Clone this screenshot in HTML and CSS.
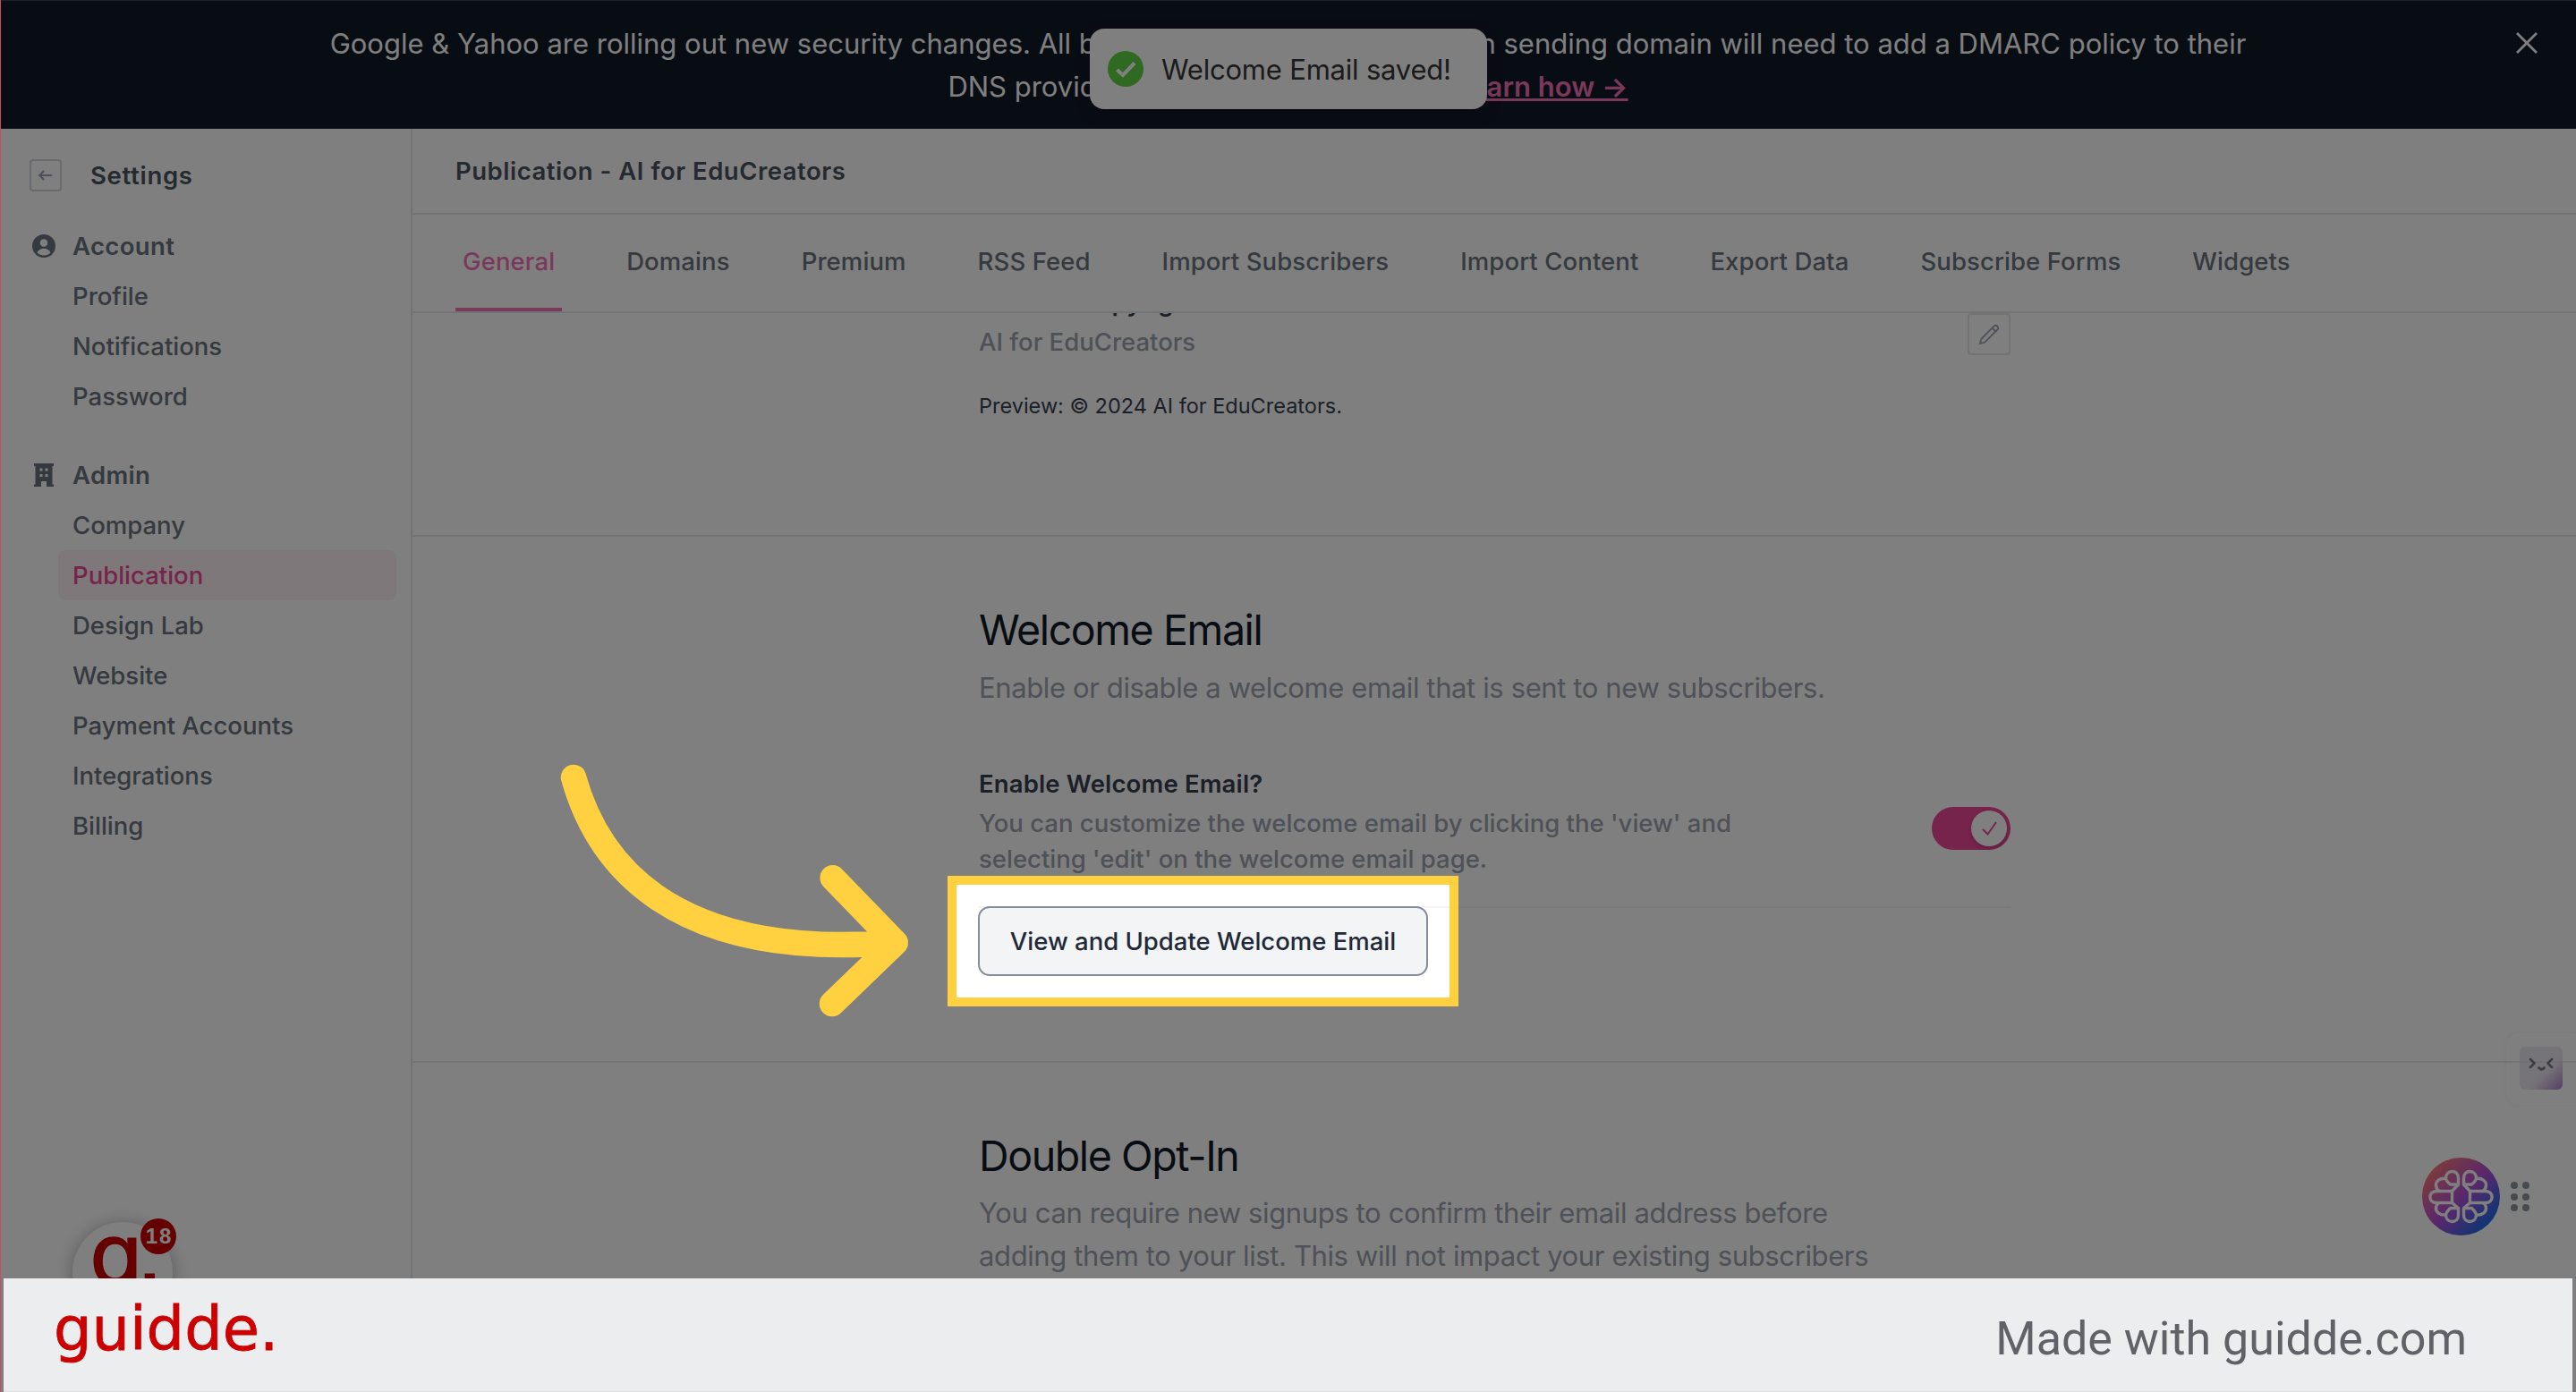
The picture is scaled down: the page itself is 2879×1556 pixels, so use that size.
FILE: index.html
```html
<!DOCTYPE html>
<html lang="en">
<head>
    <meta charset="UTF-8">
    <meta name="viewport" content="width=device-width, initial-scale=1.0">
    <title>Settings - Publication</title>
    <link rel="stylesheet" href="styles.css">
</head>
<body>
    <div class="banner">
        <p class="banner-text">
            Google &amp; Yahoo are rolling out new security changes. All <span class="banner-mid">beehiiv users with their own</span> sending domain will need to add a DMARC policy to their<br>
            DNS <span class="banner-mid2">provider before February 2024.</span> <a href="#">Learn how &rarr;</a>
        </p>
        <svg class="banner-close" viewBox="0 0 24 24"><path d="M1 1L23 23M23 1L1 23"/></svg>
    </div>

    <div class="layout">
        <aside class="sidebar">
            <div class="sidebar-head">
                <span class="back-btn">
                    <svg viewBox="0 0 20 20"><path d="M18 10H3M8 4.500L2.500 10L8 15.500"/></svg>
                </span>
                <span class="sidebar-title">Settings</span>
            </div>
            <div class="nav-group">
                <div class="nav-heading">
                    <svg class="nav-icon" viewBox="0 0 26 26">
                        <circle cx="13" cy="13" r="13" fill="#6b7280"/>
                        <circle cx="13" cy="9.500" r="4.300" fill="#fff"/>
                        <path d="M5.500 20.500C7 17.300 9.700 15.800 13 15.800S19 17.300 20.500 20.500C18.500 22.500 16 23.500 13 23.500S7.500 22.500 5.500 20.500Z" fill="#fff"/>
                    </svg>
                    Account
                </div>
                <a class="nav-item">Profile</a>
                <a class="nav-item">Notifications</a>
                <a class="nav-item">Password</a>
            </div>
            <div class="nav-group">
                <div class="nav-heading">
                    <svg class="nav-icon" viewBox="0 0 26 26">
                        <path d="M2 0H24V3H22.500V23.500H24V26H16V20H10V26H2V23.500H3.500V3H2Z" fill="#6b7280"/>
                        <path d="M8.500 5.500h3v3h-3zM14.500 5.500h3v3h-3zM8.500 12h3v3h-3zM14.500 12h3v3h-3z" fill="#fff"/>
                    </svg>
                    Admin
                </div>
                <a class="nav-item">Company</a>
                <a class="nav-item active">Publication</a>
                <a class="nav-item">Design Lab</a>
                <a class="nav-item">Website</a>
                <a class="nav-item">Payment Accounts</a>
                <a class="nav-item">Integrations</a>
                <a class="nav-item">Billing</a>
            </div>
        </aside>

        <main class="main">
            <div class="page-header">Publication - AI for EduCreators</div>
            <nav class="tabs">
                <a class="tab active">General</a>
                <a class="tab">Domains</a>
                <a class="tab">Premium</a>
                <a class="tab">RSS Feed</a>
                <a class="tab">Import Subscribers</a>
                <a class="tab">Import Content</a>
                <a class="tab">Export Data</a>
                <a class="tab">Subscribe Forms</a>
                <a class="tab">Widgets</a>
            </nav>

            <div class="content">
                <section class="section section-copyright">
                    <div class="setting">
                        <div class="setting-text">
                            <div class="label">Custom Copyright</div>
                            <div class="desc">AI for EduCreators</div>
                            <div class="preview">Preview: © 2024 AI for EduCreators.</div>
                        </div>
                        <span class="edit-btn">
                            <svg viewBox="0 0 24 24"><path d="M2 22L3.200 17L17.500 2.700A2.600 2.600 0 0 1 21.300 6.500L7 20.800ZM15.500 4.700L19.300 8.500"/></svg>
                        </span>
                    </div>
                </section>

                <section class="section section-welcome">
                    <h2>Welcome Email</h2>
                    <p class="sub">Enable or disable a welcome email that is sent to new subscribers.</p>
                    <div class="setting">
                        <div class="setting-text">
                            <div class="label">Enable Welcome Email?</div>
                            <div class="desc">You can customize the welcome email by clicking the 'view' and selecting 'edit' on the welcome email page.</div>
                        </div>
                        <span class="toggle">
                            <span class="knob">
                                <svg viewBox="0 0 20 20"><path d="M3 11L8.500 16.500L18 3"/></svg>
                            </span>
                        </span>
                    </div>
                    <button class="view-btn">View and Update Welcome Email</button>
                </section>

                <section class="section section-optin">
                    <h2>Double Opt-In</h2>
                    <p class="sub">You can require new signups to confirm their email address before adding them to your list. This will not impact your existing subscribers</p>
                </section>
            </div>
        </main>
    </div>

    <div class="toast">
        <svg viewBox="0 0 40 40">
            <circle cx="20" cy="20" r="20" fill="#61d345"/>
            <path d="M10.500 21L17 27L30 13.500" fill="none" stroke="#fff" stroke-width="4"/>
        </svg>
        Welcome Email saved!
    </div>

    <div class="chat-bubble">g.</div>
    <div class="chat-badge">18</div>

    <div class="face-widget">
        <svg viewBox="0 0 48 48">
            <path d="M12 14L16.500 18.500L12 23M36 14L31.500 18.500L36 23M21.500 23.500Q24.500 27 27.500 23.500" fill="none" stroke="#7b7d8a" stroke-width="2.800" stroke-linecap="round" stroke-linejoin="round"/>
        </svg>
    </div>

    <svg class="brain" viewBox="0 0 87 87">
        <defs>
            <linearGradient id="brainFill" x1="0.100" y1="0.100" x2="0.900" y2="0.900">
                <stop offset="0" stop-color="#ff7a6e"/>
                <stop offset="0.500" stop-color="#b44fd8"/>
                <stop offset="1" stop-color="#0a6fe8"/>
            </linearGradient>
        </defs>
        <circle cx="43.500" cy="43.500" r="43.500" fill="url(#brainFill)"/>
        <g id="lobes" fill="none" stroke="#fff" stroke-width="3.400" stroke-linejoin="round">
            <path d="M40.500 30V23C40.500 18 37.500 15.500 33.500 15.500C29 15.500 26.500 19 26.500 23C26.500 25 27.500 26.500 31.500 30Z"/>
            <path d="M27 23.500C20 22 15 27 15.500 31C15.800 34 17.500 36.500 19 37.500"/>
            <path d="M40.500 30L33.500 37.500H16C6.500 37.500 6.500 50.500 16 50.500H33.500V37.500M33.500 50.500L40.500 56.500"/>
            <path d="M40.500 56.500V64C40.500 69 37.500 71.500 33.500 71.500C29 71.500 26.500 68 26.500 64C26.500 62 27.500 60.500 31.500 56.500Z"/>
            <path d="M27 64C20 65 15 60.500 15.500 56C15.800 53.500 17 51.500 19 50.500"/>
        </g>
        <use href="#lobes" transform="translate(87 0) scale(-1 1)"/>
    </svg>
    <div class="drag-dots"><i></i><i></i><i></i><i></i><i></i><i></i></div>

    <!-- dims everything except the highlighted button -->
    <div class="spotlight"></div>

    <svg class="arrow" viewBox="600 840 440 320">
        <path d="M641 869C665 955 740 1075 1000 1053.500M930.700 981.300L1000.700 1053.700L930 1122"/>
    </svg>

    <div class="red-edge"></div>
    <footer class="guidde-bar">
        <span class="guidde-logo">guidde.</span>
        <span class="made-with">Made with guidde.com</span>
    </footer>
</body>
</html>
```
FILE: styles.css
```css
* {
    box-sizing: border-box;
}
body {
    margin: 0;
    width: 2879px;
    height: 1556px;
    position: relative;
    overflow: hidden;
    font-family: Inter, "Liberation Sans", sans-serif;
    font-size: 27.5px;
    background-color: #fff;
}

/* top banner */
.banner {
    height: 144px;
    background-color: #111827;
    border-top: 1px solid #374151;
    border-bottom: 1px solid #1f2937;
    color: #fff;
    position: relative;
}
.banner-text {
    margin: 0;
    padding-top: 24px;
    text-align: center;
    font-size: 31px;
    line-height: 48px;
    white-space: nowrap;
}
.banner-mid,
.banner-mid2 {
    display: inline-block;
    width: 466px;
    white-space: normal;
    text-align: justify;
    text-align-last: justify;
}
.banner-mid2 {
    width: 483px;
}
.banner a {
    color: #f472b6;
    font-weight: 600;
    text-decoration: underline;
}
.banner-close {
    position: absolute;
    left: 2812px;
    top: 35px;
    width: 24px;
    height: 24px;
    fill: none;
    stroke: #fff;
    stroke-width: 2.8;
}

.layout {
    display: flex;
    height: 1412px;
}

/* sidebar */
.sidebar {
    width: 461px;
    border-right: 2px solid #e5e7eb;
    padding: 34px 16px 0 33px;
    flex-shrink: 0;
}
.sidebar-head {
    display: flex;
    align-items: center;
    gap: 32px;
    height: 36px;
    margin-bottom: 33px;
}
.back-btn {
    width: 36px;
    height: 36px;
    border: 2px solid #d1d5db;
    border-radius: 4px;
    display: flex;
    align-items: center;
    justify-content: center;
}
.back-btn svg {
    width: 18px;
    height: 18px;
    fill: none;
    stroke: #9ca3af;
    stroke-width: 2.4;
}
.sidebar-title {
    font-weight: 600;
    letter-spacing: 0.7px;
    color: #4b5563;
}
.nav-group {
    margin-bottom: 32px;
}
.nav-heading {
    display: flex;
    align-items: center;
    gap: 19px;
    height: 56px;
    padding-left: 3px;
    font-weight: 600;
    letter-spacing: 0.35px;
    color: #6b7280;
}
.nav-icon {
    width: 26px;
    height: 26px;
}
.nav-item {
    display: block;
    margin-left: 32px;
    padding-left: 16px;
    line-height: 56px;
    border-radius: 8px;
    font-weight: 500;
    color: #6b7280;
}
.nav-item.active {
    background-color: #fff0f4;
    color: #ec4899;
}

/* main */
.main {
    flex: 1;
    display: flex;
    flex-direction: column;
    min-width: 0;
}
.page-header {
    height: 96px;
    flex-shrink: 0;
    line-height: 94px;
    padding-left: 48px;
    border-bottom: 2px solid #e5e7eb;
    font-weight: 600;
    letter-spacing: 0.5px;
    color: #4b5563;
}
.tabs {
    display: flex;
    gap: 64px;
    height: 110px;
    flex-shrink: 0;
    padding-left: 48px;
    border-bottom: 2px solid #e5e7eb;
}
.tab {
    padding: 0 8px;
    line-height: 104px;
    border-bottom: 4px solid transparent;
    font-weight: 500;
    letter-spacing: 0.1px;
    color: #6b7280;
}
.tab.active {
    color: #f472b6;
    border-bottom-color: #f472b6;
}
.content {
    flex: 1;
    overflow: hidden;
}
.section {
    height: 588px;
    padding: 76px 632px 0 633px;
    border-bottom: 2px solid #e5e7eb;
}
.section-copyright {
    height: 282px;
    margin-top: -32px;
    padding-top: 0;
}
.setting {
    display: flex;
    justify-content: space-between;
}
.setting-text {
    width: 880px;
}
.label {
    line-height: 40px;
    font-weight: 600;
    letter-spacing: 0.15px;
    color: #374151;
}
.desc {
    margin-top: 4px;
    line-height: 40px;
    font-weight: 500;
    color: #9ca3af;
}
.preview {
    margin-top: 36px;
    font-size: 23.5px;
    line-height: 32px;
    color: #374151;
}
.edit-btn {
    margin-top: 32px;
    width: 48px;
    height: 47px;
    border: 2px solid #e5e7eb;
    border-radius: 4px;
    display: flex;
    align-items: center;
    justify-content: center;
}
.edit-btn svg {
    width: 24px;
    height: 24px;
    fill: none;
    stroke: #9ca3af;
    stroke-width: 1.8;
}
h2 {
    margin: 0;
    font-size: 46.5px;
    font-weight: 400;
    line-height: 56px;
    letter-spacing: -1.4px;
    color: #111827;
}
.sub {
    margin: 13px 0 0;
    width: 1020px;
    font-size: 31px;
    line-height: 48px;
    letter-spacing: -0.38px;
    color: #9ca3af;
}
.section-optin .sub {
    margin-top: 12px;
}
.section-welcome .setting {
    margin-top: 63px;
    height: 159px;
    border-bottom: 2px solid #f3f4f6;
}
.toggle {
    margin-top: 46px;
    width: 88px;
    height: 48px;
    padding: 4px;
    border-radius: 24px;
    background-color: #ec4899;
    display: flex;
    justify-content: flex-end;
}
.knob {
    width: 40px;
    height: 40px;
    border-radius: 50%;
    background-color: #fff;
    box-shadow: 0 2px 4px rgba(0,0,0,0.2);
    display: flex;
    align-items: center;
    justify-content: center;
}
.knob svg {
    width: 20px;
    height: 20px;
    fill: none;
    stroke: #ec4899;
    stroke-width: 2;
}
.view-btn {
    display: block;
    margin: -2px 0 0 -1px;
    width: 503px;
    height: 78px;
    padding: 0 0 1px;
    position: relative;
    border: 2px solid #858d99;
    border-radius: 13px;
    background-color: #f3f4f6;
    font-family: inherit;
    font-size: 27.5px;
    font-weight: 500;
    color: #1f2937;
}

/* floating things */
.toast {
    position: absolute;
    left: 1218px;
    top: 32px;
    width: 444px;
    height: 90px;
    padding-left: 20px;
    display: flex;
    align-items: center;
    gap: 20px;
    border-radius: 16px;
    background-color: #fff;
    box-shadow: 0 6px 20px rgba(0,0,0,0.1);
    font-size: 31px;
    letter-spacing: -0.2px;
    color: #363636;
    white-space: nowrap;
}
.toast svg {
    width: 40px;
    height: 40px;
}
.chat-bubble {
    position: absolute;
    left: 81px;
    top: 1366px;
    width: 112px;
    height: 112px;
    border-radius: 50%;
    background-color: #fff;
    box-shadow: 0 2px 20px rgba(0,0,0,0.3);
    padding-left: 19px;
    font-family: "DejaVu Sans", sans-serif;
    font-size: 95px;
    line-height: 74px;
    letter-spacing: -8px;
    color: #c00;
    -webkit-text-stroke: 1.5px #c00;
}
.chat-badge {
    position: absolute;
    left: 157px;
    top: 1362px;
    width: 40px;
    height: 40px;
    padding-left: 2px;
    border-radius: 50%;
    background-color: #c00;
    color: #fff;
    font-family: "Liberation Sans", sans-serif;
    font-size: 24px;
    font-weight: 700;
    letter-spacing: 2px;
    line-height: 40px;
    text-align: center;
}
.face-widget {
    position: absolute;
    left: 2801px;
    top: 1155px;
    width: 90px;
    height: 80px;
    padding: 15px;
    border-radius: 14px;
    box-shadow: 0 0 6px rgba(0,0,0,0.06);
}
.face-widget svg {
    width: 48px;
    height: 48px;
    border-radius: 6px;
    background: linear-gradient(135deg, rgba(209,213,225,0.5) 0%, rgba(225,215,232,0.6) 60%, rgba(160,115,190,0.9) 100%);
}
.brain {
    position: absolute;
    left: 2707px;
    top: 1294px;
    width: 87px;
    height: 87px;
}
.drag-dots {
    position: absolute;
    left: 2806px;
    top: 1321px;
    display: grid;
    grid-template-columns: 8px 8px;
    gap: 4.5px;
}
.drag-dots i {
    width: 8px;
    height: 8px;
    border-radius: 50%;
    background-color: #8e959f;
}

.spotlight {
    position: absolute;
    left: 1059px;
    top: 979px;
    width: 571px;
    height: 146px;
    border: 10px solid #ffd141;
    box-shadow: 0 0 0 4000px rgba(0,0,0,0.5);
}
.arrow {
    position: absolute;
    left: 600px;
    top: 840px;
    width: 440px;
    height: 320px;
    fill: none;
    stroke: #ffd141;
    stroke-width: 28.5;
    stroke-linecap: round;
    stroke-linejoin: round;
}
.red-edge {
    position: absolute;
    left: 0;
    top: 0;
    width: 1px;
    height: 1556px;
    background-color: #cc4a64;
}
.guidde-bar {
    position: absolute;
    left: 4px;
    top: 1429px;
    width: 2871px;
    height: 127px;
    padding: 0 118px 0 56px;
    display: flex;
    justify-content: space-between;
    align-items: center;
    background-color: #ecedef;
    border-bottom: 1px solid #dcdddf;
}
.guidde-logo {
    padding-bottom: 12px;
    font-family: "DejaVu Sans", sans-serif;
    font-size: 67px;
    line-height: 100px;
    color: #c00;
    -webkit-text-stroke: 0.8px #c00;
}
.made-with {
    padding-top: 8px;
    font-family: Roboto, sans-serif;
    font-size: 52px;
    color: #5f6368;
}
```
